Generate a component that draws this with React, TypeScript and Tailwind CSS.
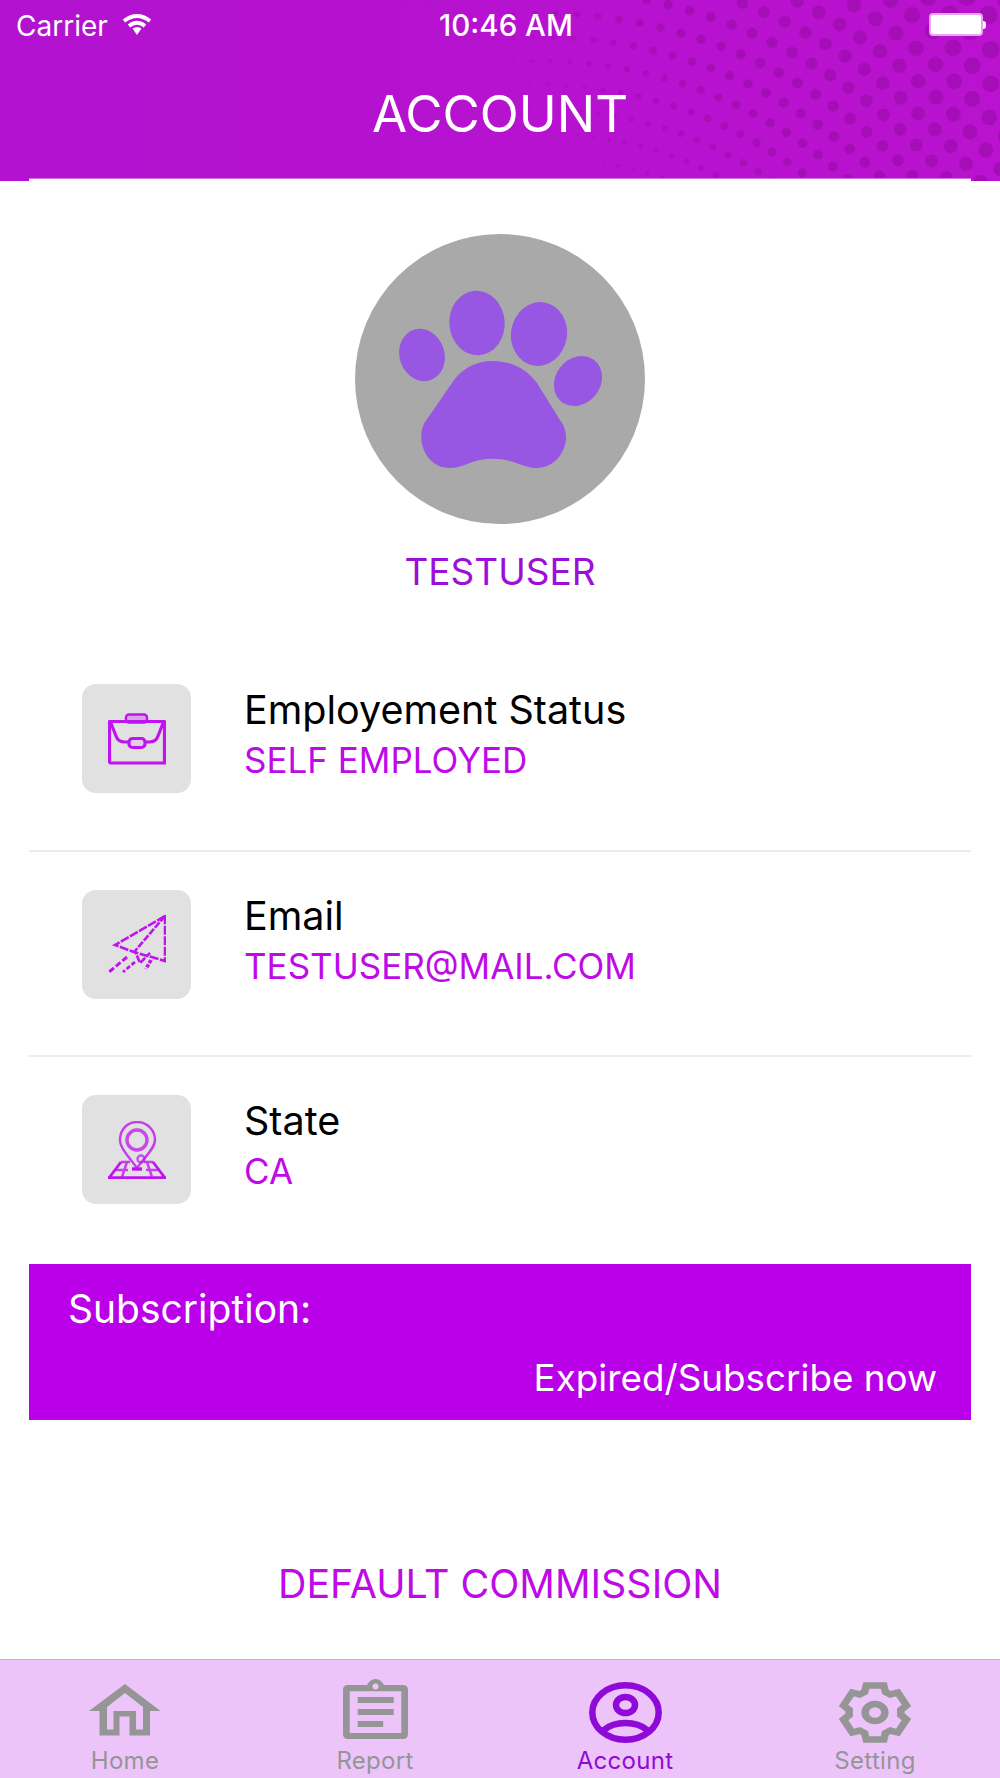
const sans = "font-['Inter',sans-serif]";

function Dots() {
  const dots: { x: number; y: number; r: number; o: number }[] = [];
  const cx = 540;
  const cy = 521;
  for (let k = -12; k < 10; k++) {
    const R = 508 + k * 24;
    for (let i = -60; i < 30; i++) {
      const deg = 8.94 + (R - 508) * 0.0092 + i * 2.39;
      const a = (deg * Math.PI) / 180;
      const x = cx + R * Math.sin(a);
      const y = cy - R * Math.cos(a);
      if (y < -12 || y > 190 || x > 1015) continue;
      const r = 1.7 + 0.0148 * (x - 608) - 0.0129 * (y - 162);
      if (r < 0.5) continue;
      dots.push({ x, y, r: Math.min(r, 9.5), o: Math.min(0.9, 0.15 + r / 6) });
    }
  }
  return (
    <svg className="absolute inset-0" width="1000" height="181" viewBox="0 0 1000 181">
      {dots.map((d, i) => (
        <circle key={i} cx={d.x} cy={d.y} r={d.r} fill="#a30eb2" opacity={d.o} />
      ))}
    </svg>
  );
}

function Paw() {
  return (
    <svg width="290" height="290" viewBox="0 0 290 290">
      <circle cx="145" cy="145" r="145" fill="#a9a9a9" />
      <g fill="#9857e2">
        <ellipse cx="122" cy="89" rx="27.7" ry="32.3" transform="rotate(-4 122 89)" />
        <ellipse cx="184" cy="100" rx="28" ry="32" transform="rotate(10 184 100)" />
        <ellipse cx="67" cy="121" rx="22.5" ry="26.5" transform="rotate(-18 67 121)" />
        <ellipse cx="223" cy="147" rx="22.5" ry="26.5" transform="rotate(38 223 147)" />
        <path d="M138 127C120 127 106 135 97 149L70 188C60 204 70 234 95 234C101 234 107 232 112 230C129 223 147 223 164 230C169 232 176 234 182 234C205 234 220 205 205 186L182 149C172 135 156 127 138 127Z" />
      </g>
    </svg>
  );
}

function Briefcase() {
  return (
    <svg className="blur-[0.7px]" width="58" height="52" viewBox="0 0 58 52" fill="none" stroke="#bf14f0" strokeWidth="3.2" strokeLinejoin="round">
      <rect x="18" y="1.5" width="21" height="8" rx="3" fill="#d9a3ea" strokeWidth="2.4" />
      <path d="M1.5 8.5H56.5V50H3a1.5 1.5 0 0 1-1.5-1.5Z" />
      <path d="M2.5 9L8 23Q10 29 17 29H41Q48 29 50 23L55.5 9" />
      <rect x="21" y="25.5" width="16" height="9" rx="3.5" fill="#e3cdea" />
    </svg>
  );
}

function Plane() {
  return (
    <svg className="blur-[0.6px]" width="58" height="58" viewBox="0 0 58 58" fill="none" stroke="#bf14f0" strokeWidth="2.6">
      <path d="M57 1L7 30L26 37L57 46Z" strokeDasharray="9 1.5" />
      <path d="M57 1L27 36L32 48L42 38" strokeDasharray="7 1.5" />
      <path d="M19 42L1 57" strokeWidth="3" strokeDasharray="6 2.5" />
      <path d="M27 47L15 57" strokeWidth="2.8" strokeDasharray="4.5 2" />
      <path d="M43 45L38 54" strokeWidth="3.6" strokeDasharray="3.5 1.5" />
    </svg>
  );
}

function Pin() {
  return (
    <svg className="blur-[0.6px]" width="58" height="58" viewBox="0 0 58 58" fill="none" stroke="#bf14f0" strokeWidth="2.4">
      <path d="M29 1C18 1 12 10 12 19C12 27 21 36 29 47C37 36 47 27 47 19C47 10 40 1 29 1Z" opacity="0.8" />
      <circle cx="29" cy="19" r="10" strokeWidth="3.4" opacity="0.75" />
      <circle cx="33" cy="38" r="3.5" opacity="0.7" />
      <path d="M13 41L1 57H57L45 41" strokeWidth="2.8" />
      <path d="M7 49H20M38 49H52M19 41L14 56M39 41L44 56M13 41H22M36 41H45" opacity="0.8" />
      <path d="M24 48H34" strokeWidth="3.4" />
      <path d="M0 57H58" strokeWidth="3" />
    </svg>
  );
}

function Row({ icon, title, value, last }: { icon: React.ReactNode; title: string; value: string; last?: boolean }) {
  return (
    <div className={`h-[205.5px] flex items-start ${last ? "" : "border-b-2 border-[#ebebeb]"}`}>
      <div className="w-[109px] h-[109px] ml-[53px] mt-[38px] rounded-[14px] bg-[#e1e1e1] flex items-center justify-center shrink-0">
        {icon}
      </div>
      <div className="ml-[53px] mt-[39px]">
        <div className="text-[39.5px] leading-[50px] text-black">{title}</div>
        <div className="text-[35px] leading-[50px] text-[#bf0ae8]">{value}</div>
      </div>
    </div>
  );
}

function HomeIcon() {
  return (
    <svg className="mt-[5px]" width="72" height="52" viewBox="0 0 72 52" fill="#959595">
      <path fillRule="evenodd" d="M36 0L71.5 27H61V51.5H40.5V32.5H30.5V51.5H10.5V27H0ZM36 9L18 23V45.5H24.5V27H47V45.5H54V23Z" />
    </svg>
  );
}

function ReportIcon() {
  return (
    <svg width="65" height="60" viewBox="0 0 65 60" fill="#959595">
      <path fillRule="evenodd" d="M5 6H24Q27 0 32.5 0Q38 0 41 6H60Q65 6 65 11V55Q65 60 60 60H5Q0 60 0 55V11Q0 6 5 6ZM6.7 12.3V54H58.3V12.3ZM32.5 4.5A3 3 0 1 0 32.5 10.5A3 3 0 1 0 32.5 4.5Z" />
      <rect x="14.7" y="18" width="36" height="6" />
      <rect x="14.7" y="30" width="36" height="6" />
      <rect x="14.7" y="42" width="25.5" height="6" />
    </svg>
  );
}

function AccountIcon() {
  return (
    <svg className="mt-[3px]" width="73" height="61" viewBox="0 0 73 61" fill="none" stroke="#8f0ad8" strokeWidth="6.5">
      <ellipse cx="36.5" cy="30.5" rx="33.2" ry="27.2" />
      <ellipse cx="36.5" cy="23" rx="9.5" ry="8" />
      <path d="M15 48Q23 41 36.5 41Q50 41 58 48" />
    </svg>
  );
}

function gearPath() {
  const pts: string[] = [];
  const pol = (x: number, y: number, t: number) => {
    const c = Math.cos(t);
    const s = Math.sin(t);
    return `${(x * c - y * s).toFixed(2)} ${(x * s + y * c).toFixed(2)}`;
  };
  for (let i = 0; i < 6; i++) {
    const t = (i * Math.PI) / 3;
    pts.push(pol(-9, -20.5, t), pol(-7.5, -27, t), pol(7.5, -27, t), pol(9, -20.5, t));
  }
  return `M${pts.join("L")}Z`;
}

function GearIcon() {
  return (
    <svg className="mt-[3px]" width="72" height="61" viewBox="-36 -30.5 72 61">
      <g transform="scale(1.16 1)" fill="none" stroke="#959595">
        <path d={gearPath()} strokeWidth="6.5" strokeLinejoin="miter" />
        <circle r="8.5" strokeWidth="6.5" />
      </g>
    </svg>
  );
}

function Tab({ icon, label, active }: { icon: React.ReactNode; label: string; active?: boolean }) {
  return (
    <div className="flex-1 flex flex-col items-center">
      <div className="h-[65px] mt-[19px] flex items-start shrink-0">{icon}</div>
      <div className={`text-[24px] leading-[30px] tracking-[0.3px] mt-[2px] shrink-0 ${active ? "text-[#8f0ad8]" : "text-[#959595]"}`}>{label}</div>
    </div>
  );
}

export default function App() {
  return (
    <div className={`${sans} w-[1000px] h-[1778px] overflow-hidden bg-white flex flex-col`}>
      <header className="relative h-[181px] bg-linear-to-r from-[#b212d0] to-[#ba12cf] shrink-0 overflow-hidden">
        <Dots />
        <div className="relative flex items-start h-[52px] px-[16px] pt-[8px] text-white text-[28px] leading-[36px]">
          <span>Carrier</span>
          <svg className="ml-[14px] mt-[5px]" width="30" height="22" viewBox="0 0 30 22" fill="none" stroke="#fff" strokeWidth="3.8">
            <path d="M2 8Q15 -2 28 8" />
            <path d="M7 13Q15 6.5 23 13" />
            <path d="M10.5 15.5L15 22L19.5 15.5Q15 12.5 10.5 15.5Z" fill="#fff" stroke="none" />
          </svg>
        </div>
        <div className="absolute left-[12px] right-0 top-[7px] text-center text-white text-[29.5px] leading-[36px] font-medium">10:46 AM</div>
        <div className="absolute top-[13px] right-[14px] flex items-center">
          <div className="w-[54px] h-[23px] bg-white rounded-[4px] border-2 border-[#e6a6ee]" />
          <div className="w-[3px] h-[8px] bg-white rounded-r-[3px]" />
        </div>
        <div className="relative text-center text-white text-[51px] leading-[60px] mt-[32px]">ACCOUNT</div>
        <div className="absolute left-[29px] right-[29px] bottom-0 h-[3px] bg-white border-t border-[#d56fe3]" />
      </header>

      <main className="flex-1 px-[29px]">
        <div className="flex justify-center pt-[53px]"><Paw /></div>
        <div className="text-center text-[#9b0fd8] text-[37px] leading-[48px] mt-[24px]">TESTUSER</div>
        <div className="mt-[50px] h-[618px]">
          <Row icon={<Briefcase />} title="Employement Status" value="SELF EMPLOYED" />
          <Row icon={<Plane />} title="Email" value="TESTUSER@MAIL.COM" />
          <Row icon={<Pin />} title="State" value="CA" last />
        </div>
        <div className="bg-[#ba00e8] h-[156px] text-white leading-[50px] px-[39px] pt-[20px]">
          <div className="text-[39px]">Subscription:</div>
          <div className="text-[36.8px] text-right -mr-[5px] mt-[19px]">Expired/Subscribe now</div>
        </div>
        <div className="text-center text-[#bf0ae8] text-[39.4px] leading-[50px] mt-[139px]">DEFAULT COMMISSION</div>
      </main>

      <nav className="h-[119px] shrink-0 bg-[#edc4f9] border-t border-[#c9b0cf] flex overflow-hidden">
        <Tab icon={<HomeIcon />} label="Home" />
        <Tab icon={<ReportIcon />} label="Report" />
        <Tab icon={<AccountIcon />} label="Account" active />
        <Tab icon={<GearIcon />} label="Setting" />
      </nav>
    </div>
  );
}
